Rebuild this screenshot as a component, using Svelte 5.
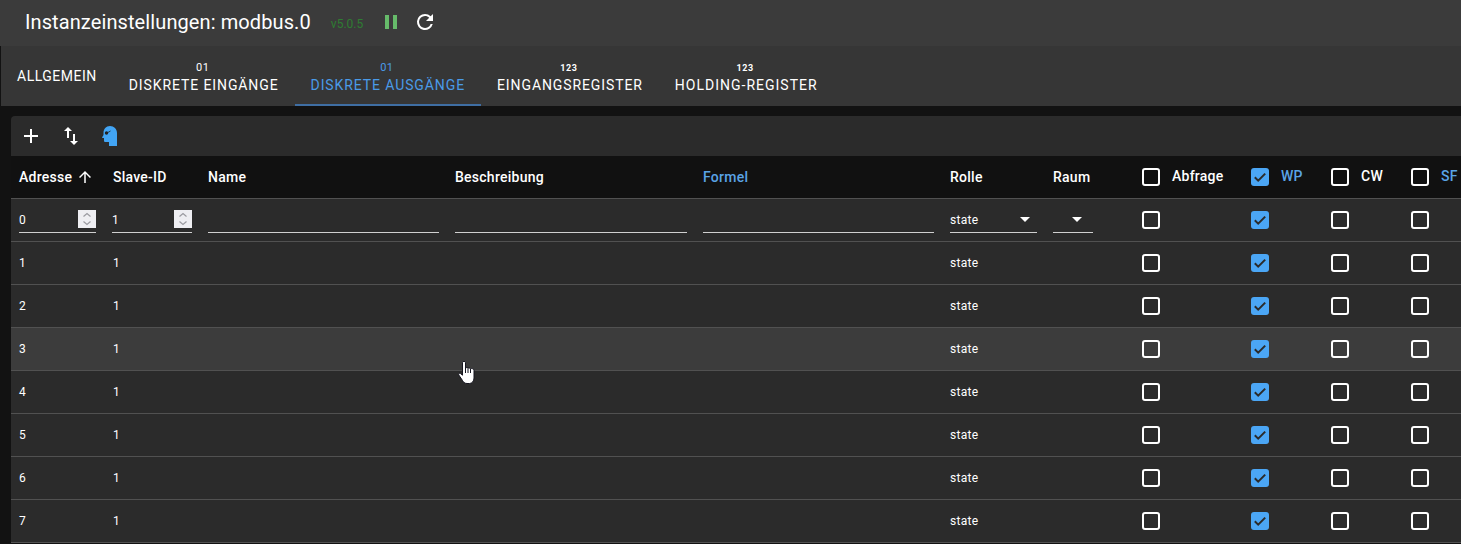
<script>
  const tabs = [
    { label: 'Allgemein', mark: '' },
    { label: 'Diskrete Eingänge', mark: '01' },
    { label: 'Diskrete Ausgänge', mark: '01', active: true },
    { label: 'Eingangsregister', mark: '123', small: true },
    { label: 'Holding-Register', mark: '123', small: true },
  ];
  const rows = [1, 2, 3, 4, 5, 6, 7];
  const flags = [
    { name: 'Abfrage', on: false },
    { name: 'WP', on: true, blue: true },
    { name: 'CW', on: false },
    { name: 'SF', on: false, blue: true },
  ];
</script>

{#snippet box(on)}
  <span class="box" class:on>
    {#if on}
      <svg viewBox="0 0 18 18" width="18" height="18"><path d="M3.800 9.200l3.400 3.400 7-7" fill="none" stroke="#2b2b2b" stroke-width="2"/></svg>
    {/if}
  </span>
{/snippet}

{#snippet spinner()}
  <span class="spin">
    <svg viewBox="0 0 18 18" width="18" height="18"><path d="M5.500 6.500L9 3.500l3.500 3M5.500 11.500L9 14.500l3.500-3" fill="none" stroke="#9a9aa0" stroke-width="1.200"/></svg>
  </span>
{/snippet}

<header class="title">
  <h1>Instanzeinstellungen: modbus.0</h1>
  <span class="version">v5.0.5</span>
  <svg class="pause" viewBox="0 0 12 14" width="12" height="14"><path d="M0 0h4v14H0zM8 0h4v14H8z" fill="#66bb6a"/></svg>
  <svg class="reload" viewBox="0 0 24 24" width="24" height="24"><path d="M17.650 6.350A7.960 7.960 0 0 0 12 4a8 8 0 1 0 7.730 10h-2.080A6 6 0 1 1 12 6c1.660 0 3.140.690 4.220 1.780L13 11h7V4l-2.350 2.350z" fill="#fff"/></svg>
</header>

<nav class="tabs">
  {#each tabs as t}
    <div class="tab" class:active={t.active}>
      {#if t.mark}<span class="mark" class:small={t.small}>{t.mark}</span>{/if}
      <span>{t.label}</span>
    </div>
  {/each}
</nav>

<main class="panel">
  <div class="toolbar">
    <svg viewBox="0 0 24 24" width="24" height="24"><path d="M19 13h-6v6h-2v-6H5v-2h6V5h2v6h6v2z" fill="#fff"/></svg>
    <svg viewBox="0 0 24 24" width="24" height="24"><path d="M9 3L5 7h3v7h2V7h3L9 3zm7 14v-7h-2v7h-3l4 4 4-4h-3z" fill="#fff"/></svg>
    <svg class="head" viewBox="0 0 15 20" width="15" height="20"><path d="M8 0c4 0 7 3 7 7v13H7v-4H3.500c-1 0-1.500-.5-1.500-1.500V12H.8c-.6 0-.8-.5-.5-1l1.200-2V7c0-4 2.500-7 6.500-7z" fill="#42a5f5"/><circle cx="4.500" cy="7" r="1.700" fill="#222"/><path d="M5 7l3.500-2" stroke="#222" stroke-width=".8"/></svg>
  </div>

  <table>
    <colgroup>
      <col style="width:94px" /><col style="width:95px" /><col style="width:247px" /><col style="width:248px" />
      <col style="width:247px" /><col style="width:103px" /><col style="width:89px" /><col style="width:109px" />
      <col style="width:80px" /><col style="width:80px" />
    </colgroup>
    <thead>
      <tr>
        <th>Adresse <svg class="arrow" viewBox="0 0 24 24" width="18" height="18"><path d="M4 12l1.410 1.410L11 7.830V20h2V7.830l5.580 5.590L20 12l-8-8-8 8z" fill="#fff"/></svg></th>
        <th>Slave-ID</th>
        <th>Name</th>
        <th>Beschreibung</th>
        <th class="blue">Formel</th>
        <th>Rolle</th>
        <th>Raum</th>
        {#each flags as f}
          <th><div class="flag">{@render box(f.on)}<span class:blue={f.blue}>{f.name}</span></div></th>
        {/each}
      </tr>
    </thead>
    <tbody>
      <tr>
        <td><div class="field w77">0{@render spinner()}</div></td>
        <td><div class="field w80 shift">1{@render spinner()}</div></td>
        <td><div class="field w231"></div></td>
        <td><div class="field w232"></div></td>
        <td><div class="field w231"></div></td>
        <td><div class="field w87">state<span class="caret"></span></div></td>
        <td><div class="field w40"><span class="caret"></span></div></td>
        {#each flags as f}
          <td>{@render box(f.on)}</td>
        {/each}
      </tr>
      {#each rows as n}
        <tr class:hover={n === 3}>
          <td>{n}</td>
          <td>1</td>
          <td></td>
          <td></td>
          <td></td>
          <td>state</td>
          <td></td>
          {#each flags as f}
            <td>{@render box(f.on)}</td>
          {/each}
        </tr>
      {/each}
    </tbody>
  </table>
</main>

<svg class="pointer" viewBox="0 0 17 23" width="17" height="23">
  <path d="M4.500 1.500c0-1.400 3-1.400 3 0V7c1-.6 2-.4 2.500.3.800-.5 2-.3 2.500.4 1-.4 3.500 0 3.500 1.800V17c0 3-2 5.500-4.500 5.500H9c-2.500 0-3.500-1.500-4.500-3L.8 14c-.8-1.200.6-2.400 1.800-1.400l1.900 1.600V1.500z" fill="#fff" stroke="#15151f"/>
  <path d="M7.500 7v5M10 7.500V12M12.500 8v4" stroke="#15151f" fill="none"/>
</svg>

<style>
  :global(body) {
    background: #121212;
    font-family: Roboto, "Liberation Sans", sans-serif;
    color: #fff;
    overflow: hidden;
  }

  .title {
    height: 46px;
    box-sizing: border-box;
    padding-left: 25px;
    display: flex;
    align-items: center;
    background: #3b3b3b;
  }
  h1 { margin: 0 0 2px; font-size: 20px; font-weight: 400; letter-spacing: .1px; line-height: 44px; }
  .version { margin-left: 20px; margin-top: 2px; font-size: 12px; color: #2e7d32; }
  .pause { margin-left: 22px; margin-top: -2px; }
  .reload { margin-left: 16px; margin-top: -2px; }

  .tabs {
    height: 60px;
    margin-left: 1px;
    display: flex;
    background: #363636;
  }
  .tab {
    box-sizing: border-box;
    padding: 0 16px 9px;
    display: flex;
    flex-direction: column;
    align-items: center;
    justify-content: flex-end;
    font-size: 14px;
    line-height: 20px;
    letter-spacing: .9px;
    text-transform: uppercase;
    border-bottom: 2px solid transparent;
  }
  .tab:first-child { justify-content: center; padding: 2px 16px 0; letter-spacing: .5px; }
  .tab:last-child { letter-spacing: 1px; }
  .tab.active { color: #4a9be8; border-bottom-color: #3f6ea3; }
  .mark { font-size: 11px; line-height: 12px; height: 13px; letter-spacing: .4px; margin-right: 2px; }
  .mark.small { font-size: 9px; font-weight: 700; letter-spacing: .6px; }

  .panel { margin: 10px 0 0 11px; }
  .toolbar {
    height: 40px;
    padding-left: 8px;
    display: flex;
    align-items: center;
    gap: 16px;
    background: #2b2b2b;
    border-top-left-radius: 4px;
  }
  .head { margin-left: 3px; }

  table {
    width: 1450px;
    table-layout: fixed;
    border-collapse: separate;
    border-spacing: 0;
    font-size: 12px;
    letter-spacing: .3px;
  }
  th {
    height: 42px;
    padding: 0 8px;
    box-sizing: content-box;
    text-align: left;
    font-size: 14px;
    font-weight: 500;
    letter-spacing: .25px;
    background: #111;
    border-bottom: 1px solid #515151;
    white-space: nowrap;
  }
  th, td { overflow: hidden; }
  td {
    height: 42px;
    padding: 0 8px;
    background: #2b2b2b;
    border-bottom: 1px solid #515151;
  }
  tr.hover td { background: #3c3c3c; }
  .blue { color: #5aa4e6; }
  .arrow { vertical-align: -4px; margin-left: 0; }

  .flag { display: flex; gap: 12px; align-items: center; }
  .flag span:last-child { margin-top: -3px; }
  .box {
    width: 18px;
    height: 18px;
    flex-shrink: 0;
    box-sizing: border-box;
    display: block;
    border: 2px solid #fff;
    border-radius: 3px;
  }
  .box.on { border: 0; background: #4ba6f5; }
  .box svg { display: block; }

  .field {
    height: 28px;
    margin-bottom: 2px;
    padding-top: 2px;
    display: flex;
    align-items: center;
    justify-content: space-between;
    box-sizing: border-box;
    border-bottom: 1px solid #d0d0d0;
  }
  .shift { margin-left: -1px; }
  .w77 { width: 77px; }
  .w80 { width: 80px; }
  .w231 { width: 231px; }
  .w232 { width: 232px; }
  .w87 { width: 87px; }
  .w40 { width: 40px; justify-content: flex-end; }
  .spin { background: #eeeef2; width: 18px; height: 18px; margin-bottom: 2px; }
  .spin svg { display: block; }
  .caret {
    margin-right: 7px;
    border-left: 5px solid transparent;
    border-right: 5px solid transparent;
    border-top: 5px solid #fff;
  }
  .w40 .caret { margin-right: 11px; }

  .pointer { position: absolute; left: 458px; top: 361px; }
</style>
